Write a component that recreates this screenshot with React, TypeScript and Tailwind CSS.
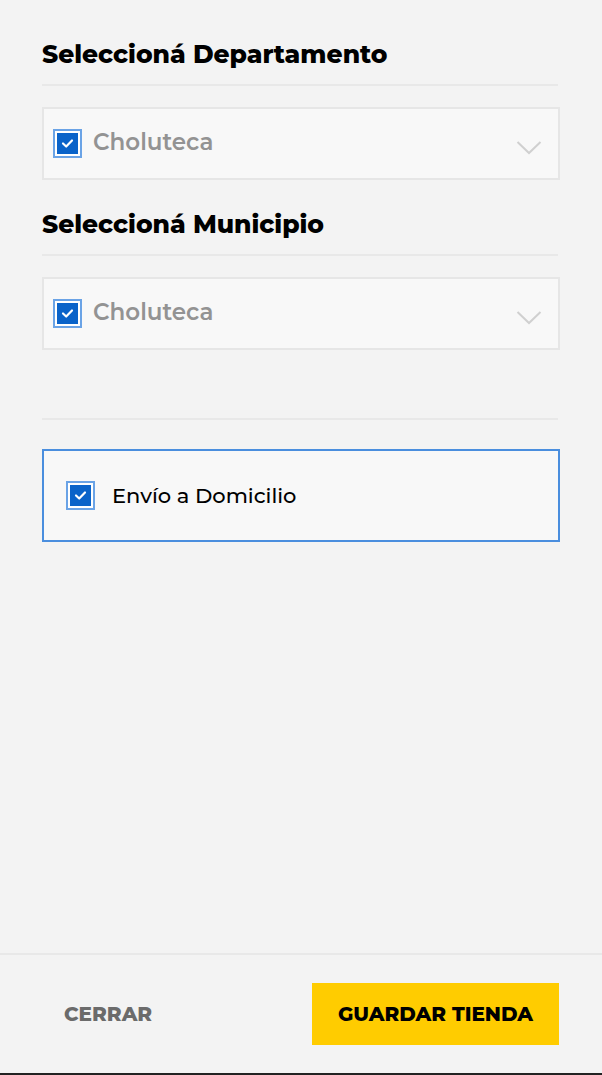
import React from 'react';

const font = { fontFamily: '"Montserrat", "DejaVu Sans", sans-serif' };

const Check: React.FC = () => (
  <span className="flex h-[29px] w-[29px] shrink-0 items-center justify-center border-2 border-[#6aa3e6] bg-white">
    <span className="flex h-[21px] w-[21px] items-center justify-center bg-[#0a63c9]">
      <svg width="13" height="11" viewBox="0 0 13 11" fill="none">
        <path d="M2 5.5 L5.2 8.5 L11 2.5" stroke="#fff" strokeWidth="2.2" strokeLinecap="round" strokeLinejoin="round" />
      </svg>
    </span>
  </span>
);

const SelectBox: React.FC<{ value: string }> = ({ value }) => (
  <div className="flex h-[73px] items-center border-2 border-[#e6e6e6] bg-[#f8f8f8] pl-[9px] pr-[16px]">
    <Check />
    <span className="ml-[11px] flex-1 pb-[2px] text-[23px] font-semibold text-[#939393]">{value}</span>
    <svg width="26" height="16" viewBox="0 0 26 16" fill="none" className="mt-[8px]">
      <path d="M1.5 2 L13 13 L24.5 2" stroke="#d0d0d0" strokeWidth="2" />
    </svg>
  </div>
);

const App: React.FC = () => {
  return (
    <div className="flex h-[1075px] w-[602px] flex-col bg-[#f3f3f3]" style={font}>
      <main className="flex-1 px-[42px] pt-[38px]">
        <h2 className="text-[25px] font-extrabold leading-[32px] text-black">Seleccioná Departamento</h2>
        <div className="mt-[14px] h-[2px] w-[516px] bg-[#e8e8e8]" />
        <div className="mt-[21px]">
          <SelectBox value="Choluteca" />
        </div>

        <h2 className="mt-[28px] text-[25px] font-extrabold leading-[32px] text-black">Seleccioná Municipio</h2>
        <div className="mt-[14px] h-[2px] w-[516px] bg-[#e8e8e8]" />
        <div className="mt-[21px]">
          <SelectBox value="Choluteca" />
        </div>

        <div className="mt-[68px] h-[2px] w-[516px] bg-[#e8e8e8]" />

        <label className="mt-[29px] flex h-[93px] items-center border-2 border-[#4a8ede] bg-[#f8f8f8] pl-[22px]">
          <Check />
          <span className="ml-[17px] text-[21px] font-medium text-black">Envío a Domicilio</span>
        </label>
      </main>

      <footer className="flex h-[120px] items-center justify-between border-t-2 border-[#e8e8e8] pl-[64px] pr-[43px]">
        <button className="text-[20px] font-extrabold text-[#6b6b6b]">CERRAR</button>
        <button className="flex h-[62px] w-[247px] items-center justify-center bg-[#ffcc00] text-[20px] font-extrabold text-black">
          GUARDAR TIENDA
        </button>
      </footer>
      <div className="h-[2px] bg-[#222]" />
    </div>
  );
};

export default App;
